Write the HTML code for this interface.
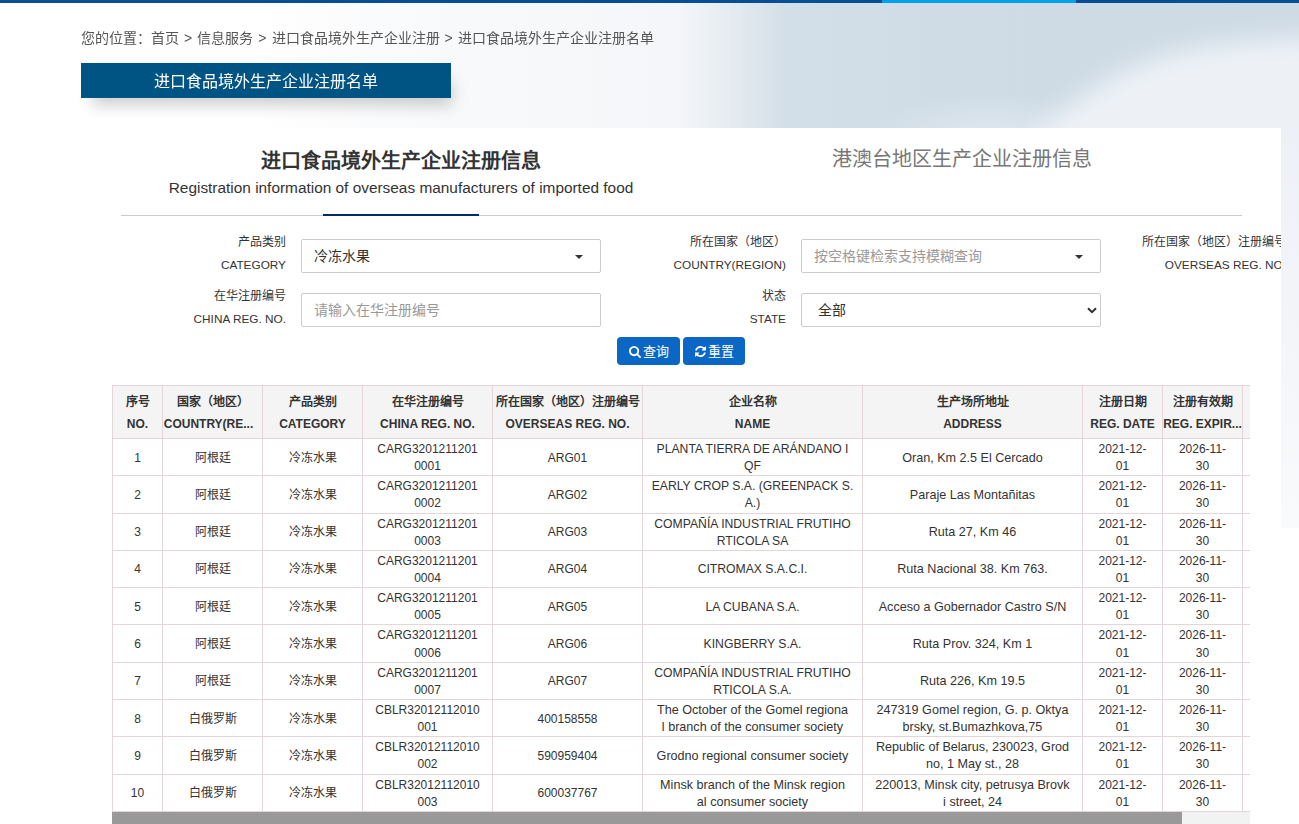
<!DOCTYPE html>
<html lang="zh-CN"><head><meta charset="utf-8">
<style>
*{margin:0;padding:0;box-sizing:border-box}
html,body{width:1299px;height:824px;overflow:hidden;background:#fff}
body{position:relative;font-family:"Liberation Sans",sans-serif;color:#333}
.bg{position:absolute;left:0;top:0;width:1299px;height:128px;overflow:hidden;
background:
 radial-gradient(ellipse 120px 40px at 990px 135px, rgba(228,235,242,.8), rgba(228,235,242,0)),
 linear-gradient(90deg,#ffffff 0px,#ffffff 250px,#f8f9fb 450px,#f6f8fa 560px,#f4f6f9 680px,#e2e9ef 740px,#d3dfe8 785px,#cfdce6 950px,#cedbe5 1299px);
}
.cloud{position:absolute;left:0;top:0;width:1299px;height:128px;filter:blur(12px)}
.cloud i{position:absolute;left:0;top:0;width:1400px;height:200px;background:#edf1f6;clip-path:polygon(1010px 170px,1045px 125px,1080px 98px,1115px 76px,1155px 58px,1205px 46px,1260px 40px,1400px 34px,1400px 200px)}
.bgr{position:absolute;left:1281px;top:128px;width:18px;height:400px;background:linear-gradient(180deg,#edf0f6,#f9fafc)}
.topbar{position:absolute;left:0;top:0;width:1299px;height:3px;background:#064f96}
.topbar i{position:absolute;left:882px;top:0;width:194px;height:3px;background:#02a0ea}
.crumb{position:absolute;left:81px;top:28px;font-size:14px;line-height:20px;color:#555;white-space:nowrap}
.crumb b{font-weight:normal;padding:0 1.15px}
.tab{position:absolute;left:81px;top:63px;width:370px;height:35px;background:#005484;color:#fff;font-size:16px;line-height:37px;text-align:center;box-shadow:6px 12px 16px -5px rgba(0,0,0,.2)}
.panel{position:absolute;left:81px;top:128px;width:1200px;height:696px;background:#fff;overflow:hidden}
.p{position:absolute}
.t1{left:40px;top:19px;width:560px;text-align:center;font-size:20px;font-weight:bold;line-height:28px;color:#333}
.t1s{left:40px;top:50px;width:560px;text-align:center;font-size:15.4px;line-height:20px;color:#333}
.t2{left:600px;top:17px;width:561px;text-align:center;font-size:20px;line-height:28px;color:#777}
.line{left:40px;top:87px;width:1121px;height:1px;background:#cbcbcb}
.uline{left:242px;top:86px;width:156px;height:2px;background:#002a6e}
.lab{text-align:right;width:185px;font-size:12px;line-height:23px;color:#333;white-space:nowrap}
.inp{width:300px;height:34px;border:1px solid #ccc;border-radius:2px;font-size:14px;line-height:32px;padding-left:12px;color:#333;background:#fff}
.ph{color:#999}
.le{font-size:11.8px}
.caret{position:absolute;right:17px;top:15px;width:0;height:0;border-left:4px solid transparent;border-right:4px solid transparent;border-top:4.5px solid #333}
.btn{height:28px;background:#0b67c6;border-radius:4px;color:#fff;font-size:13px;line-height:28px}
.ic{position:absolute}
.bt{position:absolute;top:0}
.tw{position:absolute;left:31px;top:257px;width:1138px;height:427px;overflow:hidden}
.tb{border-collapse:collapse;table-layout:fixed;width:1210px}
.tb th,.tb td{border:1px solid #e6d5d6;text-align:center;vertical-align:middle;padding:0;font-size:12px;color:#333;overflow:hidden;white-space:nowrap}
.tb th{background:#f4f4f4;font-weight:bold;line-height:22px;height:53px;padding-top:2px}
.tb td{line-height:17.14px;height:37.29px;padding-top:2px}
.tb td:nth-child(6),.tb td:nth-child(7){font-size:12.6px}
.tb tr:nth-child(-n+8) td:nth-child(6){font-size:12.2px}
.sb{position:absolute;left:31px;top:684px;width:1138px;height:12px;background:#f1f2f2}
.sb i{position:absolute;left:0;top:0;width:1070px;height:12px;background:#999}
</style></head><body>
<div class="bg"><div class="cloud"><i></i></div></div><div class="bgr"></div>
<div class="topbar"><i></i></div>
<div class="crumb">您的位置：首页<b> &gt; </b>信息服务<b> &gt; </b>进口食品境外生产企业注册<b> &gt; </b>进口食品境外生产企业注册名单</div>
<div class="tab">进口食品境外生产企业注册名单</div>
<div class="panel">
 <div class="p t1">进口食品境外生产企业注册信息</div>
 <div class="p t1s">Registration information of overseas manufacturers of imported food</div>
 <div class="p t2">港澳台地区生产企业注册信息</div>
 <div class="p line"></div>
 <div class="p uline"></div>

 <div class="p lab" style="left:20px;top:103px">产品类别<br><span class="le">CATEGORY</span></div>
 <div class="p inp" style="left:220px;top:111px">冷冻水果<span class="caret"></span></div>
 <div class="p lab" style="left:520px;top:103px">所在国家（地区）<br><span class="le">COUNTRY(REGION)</span></div>
 <div class="p inp ph" style="left:720px;top:111px">按空格键检索支持模糊查询<span class="caret"></span></div>
 <div class="p lab" style="left:1020px;top:103px">所在国家（地区）注册编号<br><span class="le">OVERSEAS REG. NO.</span></div>

 <div class="p lab" style="left:20px;top:157px">在华注册编号<br><span class="le">CHINA REG. NO.</span></div>
 <div class="p inp ph" style="left:220px;top:165px">请输入在华注册编号</div>
 <div class="p lab" style="left:520px;top:157px">状态<br><span class="le">STATE</span></div>
 <div class="p inp" style="left:720px;top:165px;padding-left:16px">全部<svg style="position:absolute;left:285px;top:13px" width="10" height="7" viewBox="0 0 10 7"><path d="M1 1.2L5 5.2L9 1.2" fill="none" stroke="#333" stroke-width="2"/></svg></div>

 <div class="p btn" style="left:536px;top:209px;width:63px"><svg class="ic" style="left:12px;top:9px" width="12" height="12" viewBox="0 0 1664 1664"><path fill="#fff" d="M1152 704q0-185-131.5-316.5T704 256 387.5 387.5 256 704t131.5 316.5T704 1152t316.5-131.5T1152 704zm512 832q0 52-38 90t-90 38q-54 0-90-38l-343-342q-179 124-399 124-143 0-273.5-55.5t-225-150-150-225T0 704t55.5-273.5 150-225 225-150T704 0t273.5 55.5 225 150 150 225T1408 704q0 220-124 399l343 343q37 37 37 90z"/></svg><span class="bt" style="left:26px;top:1px">查询</span></div>
<div class="tw"><table class="tb"><colgroup><col style="width:50px"><col style="width:100px"><col style="width:100px"><col style="width:130px"><col style="width:150px"><col style="width:220px"><col style="width:220px"><col style="width:80px"><col style="width:80px"><col style="width:80px"></colgroup>
<tr class="hd"><th>序号<br>NO.</th><th>国家（地区）<br><span style="position:relative;left:-4px">COUNTRY(RE...</span></th><th>产品类别<br>CATEGORY</th><th>在华注册编号<br>CHINA REG. NO.</th><th>所在国家（地区）注册编号<br>OVERSEAS REG. NO.</th><th>企业名称<br>NAME</th><th>生产场所地址<br>ADDRESS</th><th>注册日期<br>REG. DATE</th><th>注册有效期<br>REG. EXPIR...</th><th><br></th></tr>
<tr><td>1</td><td>阿根廷</td><td>冷冻水果</td><td>CARG3201211201<br>0001</td><td>ARG01</td><td>PLANTA TIERRA DE ARÁNDANO I<br>QF</td><td>Oran, Km 2.5 El Cercado</td><td>2021-12-<br>01</td><td>2026-11-<br>30</td><td></td></tr>
<tr><td>2</td><td>阿根廷</td><td>冷冻水果</td><td>CARG3201211201<br>0002</td><td>ARG02</td><td>EARLY CROP S.A. (GREENPACK S.<br>A.)</td><td>Paraje Las Montañitas</td><td>2021-12-<br>01</td><td>2026-11-<br>30</td><td></td></tr>
<tr><td>3</td><td>阿根廷</td><td>冷冻水果</td><td>CARG3201211201<br>0003</td><td>ARG03</td><td>COMPAÑÍA INDUSTRIAL FRUTIHO<br>RTICOLA SA</td><td>Ruta 27, Km 46</td><td>2021-12-<br>01</td><td>2026-11-<br>30</td><td></td></tr>
<tr><td>4</td><td>阿根廷</td><td>冷冻水果</td><td>CARG3201211201<br>0004</td><td>ARG04</td><td>CITROMAX S.A.C.I.</td><td>Ruta Nacional 38. Km 763.</td><td>2021-12-<br>01</td><td>2026-11-<br>30</td><td></td></tr>
<tr><td>5</td><td>阿根廷</td><td>冷冻水果</td><td>CARG3201211201<br>0005</td><td>ARG05</td><td>LA CUBANA S.A.</td><td>Acceso a Gobernador Castro S/N</td><td>2021-12-<br>01</td><td>2026-11-<br>30</td><td></td></tr>
<tr><td>6</td><td>阿根廷</td><td>冷冻水果</td><td>CARG3201211201<br>0006</td><td>ARG06</td><td>KINGBERRY S.A.</td><td>Ruta Prov. 324, Km 1</td><td>2021-12-<br>01</td><td>2026-11-<br>30</td><td></td></tr>
<tr><td>7</td><td>阿根廷</td><td>冷冻水果</td><td>CARG3201211201<br>0007</td><td>ARG07</td><td>COMPAÑÍA INDUSTRIAL FRUTIHO<br>RTICOLA S.A.</td><td>Ruta 226, Km 19.5</td><td>2021-12-<br>01</td><td>2026-11-<br>30</td><td></td></tr>
<tr><td>8</td><td>白俄罗斯</td><td>冷冻水果</td><td>CBLR32012112010<br>001</td><td>400158558</td><td>The October of the Gomel regiona<br>l branch of the consumer society</td><td>247319 Gomel region, G. p. Oktya<br>brsky, st.Bumazhkova,75</td><td>2021-12-<br>01</td><td>2026-11-<br>30</td><td></td></tr>
<tr><td>9</td><td>白俄罗斯</td><td>冷冻水果</td><td>CBLR32012112010<br>002</td><td>590959404</td><td>Grodno regional consumer society</td><td>Republic of Belarus, 230023, Grod<br>no, 1 May st., 28</td><td>2021-12-<br>01</td><td>2026-11-<br>30</td><td></td></tr>
<tr><td>10</td><td>白俄罗斯</td><td>冷冻水果</td><td>CBLR32012112010<br>003</td><td>600037767</td><td>Minsk branch of the Minsk region<br>al consumer society</td><td>220013, Minsk city, petrusya Brovk<br>i street, 24</td><td>2021-12-<br>01</td><td>2026-11-<br>30</td><td></td></tr>
</table></div>
<div class="sb"><i></i></div>
 <div class="p btn" style="left:602px;top:209px;width:62px"><svg class="ic" style="left:12px;top:9px" width="11" height="11" viewBox="0 0 1536 1536"><path fill="#fff" d="M1511 928q0 5-1 7-64 268-268 434.5T764 1536q-146 0-282.5-55T238 1324l-129 129q-19 19-45 19t-45-19-19-45V960q0-26 19-45t45-19h448q26 0 45 19t19 45-19 45l-137 137q71 66 161 102t187 36q134 0 250-65t186-179q11-17 53-117 8-23 30-23h192q13 0 22.5 9.5t9.5 22.5zm25-800v448q0 26-19 45t-45 19h-448q-26 0-45-19t-19-45 19-45l138-138Q969 256 768 256q-134 0-250 65T332 500q-11 17-53 117-8 23-30 23H50q-13 0-22.5-9.5T18 608v-7q65-268 270-434.5T768 0q146 0 284 55.5T1297 212l130-129q19-19 45-19t45 19 19 45z"/></svg><span class="bt" style="left:25px;top:1px">重置</span></div>
</div>
</body></html>
